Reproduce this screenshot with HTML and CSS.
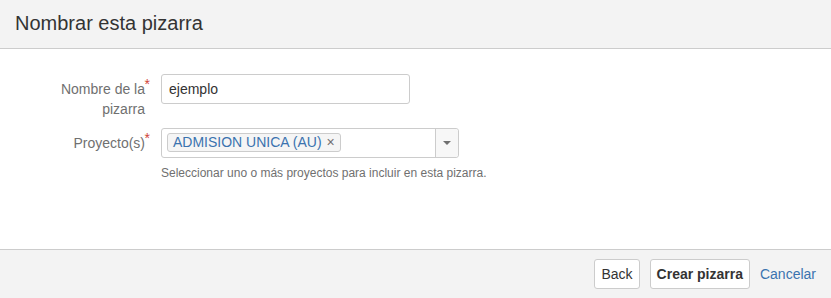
FILE: index.html
```html
<!DOCTYPE html>
<html lang="es">
<head>
    <meta charset="UTF-8">
    <title>Nombrar esta pizarra</title>
    <link rel="stylesheet" href="styles.css">
</head>
<body>
    <div class="dialog">
        <header class="dialog-header">
            <h2>Nombrar esta pizarra</h2>
        </header>

        <form class="dialog-content">
            <div class="field-group">
                <label for="board-name">Nombre de la pizarra<span class="required">*</span></label>
                <div class="field">
                    <input type="text" id="board-name" class="text" value="ejemplo">
                </div>
            </div>

            <div class="field-group">
                <label>Proyecto(s)<span class="required">*</span></label>
                <div class="field">
                    <div class="multi-select">
                        <div class="items">
                            <span class="item">ADMISION UNICA (AU)<span class="remove">&times;</span></span>
                        </div>
                        <span class="drop"><span class="arrow"></span></span>
                    </div>
                    <div class="description">Seleccionar uno o más proyectos para incluir en esta pizarra.</div>
                </div>
            </div>
        </form>

        <footer class="dialog-footer">
            <button type="button" class="button">Back</button>
            <button type="submit" class="button primary">Crear pizarra</button>
            <a href="#" class="cancel">Cancelar</a>
        </footer>
    </div>
</body>
</html>
```

FILE: styles.css
```css
:root {
    --text: #333333;
    --muted: #707070;
    --border: #cccccc;
    --panel: #f3f3f3;
    --link: #3b73af;
    --required: #d04437;
}

body {
    margin: 0;
    font-family: "Liberation Sans", Arial, sans-serif;
    font-size: 14px;
    color: var(--text);
    background: #fff;
}

.dialog {
    width: 831px;
    height: 298px;
    display: flex;
    flex-direction: column;
}

.dialog-header {
    height: 48px;
    background: var(--panel);
    border-bottom: 1px solid var(--border);
    padding: 0 15px;
}

.dialog-header h2 {
    margin: 0;
    font-size: 20px;
    font-weight: normal;
    line-height: 46px;
    color: var(--text);
}

.dialog-content {
    flex: 1;
    padding-top: 25px;
}

.field-group {
    display: grid;
    grid-template-columns: 130px 1fr;
    column-gap: 16px;
    padding-left: 15px;
    margin-bottom: 9px;
}

.field-group label {
    position: relative;
    text-align: right;
    color: var(--muted);
    line-height: 20px;
    padding-top: 5px;
}

.required {
    position: absolute;
    right: -5px;
    top: 3px;
    color: var(--required);
    font-size: 14px;
    line-height: 14px;
}

.field input.text {
    box-sizing: border-box;
    width: 249px;
    height: 30px;
    border: 1px solid var(--border);
    border-radius: 3px;
    padding: 4px 7px;
    font-family: inherit;
    font-size: 14px;
    color: var(--text);
}

.multi-select {
    box-sizing: border-box;
    width: 298px;
    height: 30px;
    border: 1px solid var(--border);
    border-radius: 3px;
    display: flex;
}

.items {
    flex: 1;
    padding: 4px 5px;
}

.item {
    display: inline-block;
    border: 1px solid var(--border);
    border-radius: 3px;
    background: #f5f5f5;
    color: var(--link);
    font-size: 14px;
    line-height: 17px;
    padding: 0 5px;
}

.remove {
    color: var(--muted);
    font-size: 14px;
    margin-left: 5px;
}

.drop {
    width: 22px;
    border-left: 1px solid var(--border);
    background: #f7f7f7;
    border-radius: 0 3px 3px 0;
    display: flex;
    align-items: center;
    justify-content: center;
}

.arrow {
    width: 0;
    height: 0;
    border-left: 4px solid transparent;
    border-right: 4px solid transparent;
    border-top: 4px solid #707070;
}

.description {
    font-size: 12px;
    color: var(--muted);
    margin-top: 7px;
    line-height: 16px;
}

.dialog-footer {
    height: 48px;
    background: var(--panel);
    border-top: 1px solid var(--border);
    display: flex;
    justify-content: flex-end;
    align-items: center;
    gap: 10px;
    padding: 0 15px 0 0;
}

.button {
    height: 30px;
    padding: 0 6px;
    background: #fff;
    border: 1px solid var(--border);
    border-radius: 3px;
    font-family: inherit;
    font-size: 14px;
    color: var(--text);
}

.button.primary {
    font-weight: bold;
}

.cancel {
    color: var(--link);
    text-decoration: none;
}
```
